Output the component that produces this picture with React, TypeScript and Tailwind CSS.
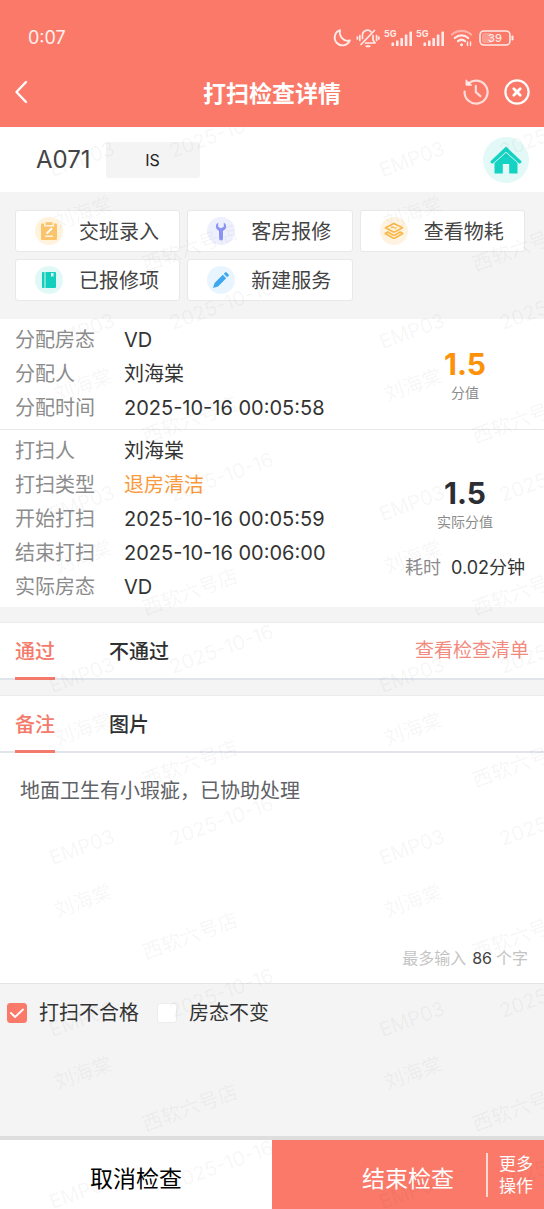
import { useState } from "react";
import type { ReactNode } from "react";

const signalIcon = (
  <svg viewBox="0 0 30 20" className="h-5 w-[30px]" fill="currentColor">
    <text x="0" y="9" fontSize="9" fontWeight="700">5G</text>
    <rect x="7.5" y="14.5" width="2.6" height="3.5" rx="0.6" />
    <rect x="12" y="12.5" width="2.6" height="5.5" rx="0.6" />
    <rect x="16.4" y="10" width="2.6" height="8" rx="0.6" />
    <rect x="20.8" y="6.5" width="2.6" height="11.5" rx="0.6" />
    <rect x="25.4" y="3.5" width="2.6" height="14.5" rx="0.6" />
  </svg>
);

const moonIcon = (
  <svg viewBox="0 0 20 20" className="size-5" fill="none" stroke="currentColor" strokeWidth={1.9} strokeLinejoin="round">
    <path d="M8 2.2a7.8 7.8 0 1 0 9.8 10.2c-5.800 2-11-4-9.800-10.200z" />
  </svg>
);

const muteIcon = (
  <svg viewBox="0 0 24 20" className="h-5 w-6" fill="none" stroke="currentColor" strokeWidth={1.7} strokeLinecap="round" strokeLinejoin="round">
    <path d="M6.500 10.500V8a5 5 0 0 1 8.500-4.200M17 7.500v4.500l2 3H9.500" />
    <path d="M5 16.500L18.500 2.500" />
    <path d="M10.500 18.300h3" strokeWidth={2} />
    <path d="M3.800 7.500v5M1.400 9v2M20.600 7.500v5M22.800 9v2" />
  </svg>
);

const wifiIcon = (
  <svg viewBox="0 0 24 20" className="h-5 w-6" fill="none" stroke="currentColor" strokeWidth={2.2} strokeLinecap="round">
    <path d="M2 6.5a14.5 14.5 0 0 1 19 0" opacity="0.5" />
    <path d="M4.8 10a10 10 0 0 1 13.4 0" />
    <path d="M8 13.2a5.5 5.5 0 0 1 7 0" />
    <circle cx="11.5" cy="16.8" r="1" fill="currentColor" strokeWidth={1} />
    <path d="M17.5 17.5v-3.5M20.5 14v3.5" strokeWidth={1.4} />
  </svg>
);

const batteryIcon = (
  <svg viewBox="0 0 36 20" className="h-5 w-9" fill="none" stroke="currentColor">
    <rect x="2" y="3" width="30" height="14" rx="4" strokeWidth={1.6} />
    <rect x="4" y="5" width="10" height="10" rx="2" fill="currentColor" stroke="none" opacity="0.3" />
    <path d="M34.5 8.5v3" strokeWidth={2} strokeLinecap="round" />
    <text x="17" y="14" fontSize="11" fontWeight="500" textAnchor="middle" fill="currentColor" stroke="none">39</text>
  </svg>
);

const backIcon = (
  <svg viewBox="0 0 14 24" className="h-6 w-3.5" fill="none" stroke="currentColor" strokeWidth={2.4} strokeLinecap="round" strokeLinejoin="round">
    <path d="M12 2L2.5 12 12 22" />
  </svg>
);

const historyIcon = (
  <svg viewBox="0 0 26 26" className="size-[26px]" fill="none" stroke="currentColor" strokeWidth={2.2} strokeLinecap="round" strokeLinejoin="round">
    <path d="M1.6 12.5a11.5 11.5 0 1 0 4.2-8.3" />
    <path d="M3 1.200v5h5.400z" fill="currentColor" strokeWidth={1} />
    <path d="M12.8 6.8v6.4l4.6 4" />
  </svg>
);

const closeIcon = (
  <svg viewBox="0 0 26 26" className="size-[26px]" fill="none" stroke="currentColor" strokeLinecap="round">
    <circle cx="13" cy="13" r="11.6" strokeWidth={2.2} />
    <path d="M9.8 9.8l6.4 6.4M16.2 9.8l-6.4 6.400" strokeWidth={2.8} />
  </svg>
);

const homeIcon = (
  <svg viewBox="0 0 32 28" className="h-7 w-8" fill="#15d3c3">
    <path d="M16 0.500L31.200 15c1 1.200-0.800 3.400-2.400 2.200L16 5.800 3.200 17.200c-1.600 1.200-3.400-1-2.400-2.200z" />
    <path d="M16 6.800L27.500 17V27.5h-8.300V18h-6.400v9.500H4.500V17z" />
  </svg>
);

const clipboardIcon = (
  <svg viewBox="0 0 18 20" className="h-5 w-[18px]">
    <path d="M2 2.500h2v3h10v-3h2a1 1 0 0 1 1 1v14.500a1 1 0 0 1-1 1H2a1 1 0 0 1-1-1V3.500a1 1 0 0 1 1-1z" fill="#fcc46a" />
    <path d="M5.500 1.2h7v2.800h-7z" fill="#fcc46a" />
    <path d="M7.200 12l4.400-4.400" stroke="#fff" strokeWidth={2} strokeLinecap="round" />
    <path d="M5 15.2h8" stroke="#fff" strokeWidth={1.2} />
  </svg>
);

const wrenchIcon = (
  <svg viewBox="0 0 16 20" className="h-5 w-4" fill="#8c96f4">
    <path d="M5.200 1.600v4.200L8 7.200l2.800-1.400V1.600A4.600 4.600 0 0 1 10 10v7.400a2 2 0 0 1-4 0V10A4.600 4.600 0 0 1 5.200 1.600z" />
  </svg>
);

const layersIcon = (
  <svg viewBox="0 0 20 18" className="h-[18px] w-5" fill="none" stroke="#f8b84a" strokeWidth={1.7} strokeLinejoin="round" strokeLinecap="round">
    <path d="M10 1.5l8.500 4.200-7 3.800a3 3 0 0 1-3 0L1.500 5.700z" />
    <path d="M7.500 5.600q1.200-1.200 2.500 0t2.500 0" strokeWidth={1.2} />
    <path d="M1.300 11.500l7.200 4.200a3 3 0 0 0 3 0l7.200-4.200-2.500-1.500-4.700 2.800a3 3 0 0 1-3 0L3.800 10z" />
  </svg>
);

const bookIcon = (
  <svg viewBox="0 0 14 18" className="h-[18px] w-3.5">
    <rect x="0" y="1" width="14" height="16" rx="1" fill="#12cfbd" />
    <path d="M3 1v16" stroke="#d9f7f4" strokeWidth={1} />
    <path d="M9 2h2.500v4L10.250 5 9 6z" fill="#d9f7f4" />
  </svg>
);

const pencilIcon = (
  <svg viewBox="0 0 18 18" className="size-[18px]" fill="#3ea6ee">
    <path d="M10.8 3.8l3.4 3.4-8.200 8.200L1 17l1.600-5z" />
    <path d="M11.8 2.8L13.2 1.4a1 1 0 0 1 1.4 0l2 2a1 1 0 0 1 0 1.4l-1.400 1.4z" />
  </svg>
);

const actions = [
  { label: "交班录入", icon: clipboardIcon, tint: "bg-[#fff3de]" },
  { label: "客房报修", icon: wrenchIcon, tint: "bg-[#eff0fe]" },
  { label: "查看物耗", icon: layersIcon, tint: "bg-[#fef3e0]" },
  { label: "已报修项", icon: bookIcon, tint: "bg-[#e0f9f7]" },
  { label: "新建服务", icon: pencilIcon, tint: "bg-[#e8f5fe]" },
];

const assignRows = [
  { label: "分配房态", value: "VD" },
  { label: "分配人", value: "刘海棠" },
  { label: "分配时间", value: "2025-10-16 00:05:58" },
];

const cleanRows = [
  { label: "打扫人", value: "刘海棠" },
  { label: "打扫类型", value: "退房清洁", highlight: true },
  { label: "开始打扫", value: "2025-10-16 00:05:59" },
  { label: "结束打扫", value: "2025-10-16 00:06:00" },
  { label: "实际房态", value: "VD" },
];

type Row = { label: string; value: string; highlight?: boolean };

function Rows({ rows }: { rows: Row[] }) {
  return (
    <dl className="flex-1">
      {rows.map(({ label, value, highlight }) => (
        <div key={label} className="flex h-[34px] items-center">
          <dt className="w-[109px] shrink-0 text-[#8c8c8c]">{label}</dt>
          <dd className={highlight ? "text-[#fb9a3c]" : "text-[#333]"}>{value}</dd>
        </div>
      ))}
    </dl>
  );
}

function Tabs({ names, children }: { names: string[]; children?: ReactNode }) {
  const [active, setActive] = useState(names[0]);
  return (
    <div className="flex h-[58px] items-stretch border-t border-b-2 border-t-[#ececec] border-b-[#e2e4ec] bg-white px-[15px]">
      <div role="tablist" className="flex flex-1 gap-[54px]">
        {names.map((name) => (
          <button
            key={name}
            type="button"
            role="tab"
            aria-selected={name === active}
            onClick={() => setActive(name)}
            className={
              name === active
                ? "-mb-0.5 border-b-3 border-[#f47a6b] pt-1 font-medium text-[#f47a6b]"
                : "-mb-0.5 border-b-3 border-transparent pt-1 font-medium text-[#303133]"
            }
          >
            {name}
          </button>
        ))}
      </div>
      {children}
    </div>
  );
}

function Check({ label, defaultChecked }: { label: string; defaultChecked?: boolean }) {
  return (
    <label className="flex items-center gap-3 text-[#333]">
      <span className="relative flex">
        <input
          type="checkbox"
          defaultChecked={defaultChecked}
          className="peer size-5 appearance-none rounded-[3px] border border-[#ececec] bg-white checked:border-[#fb7969] checked:bg-[#fb7969]"
        />
        <svg
          viewBox="0 0 20 20"
          className="pointer-events-none absolute inset-0 hidden size-5 peer-checked:block"
          fill="none"
          stroke="#fff"
          strokeWidth={1.8}
          strokeLinecap="round"
          strokeLinejoin="round"
        >
          <path d="M4 10l4 4 8-7.5" />
        </svg>
      </span>
      {label}
    </label>
  );
}

// two columns cover a phone, the other two only show on wider windows
const watermarkColumns = ["relative", "relative", "relative hidden sm:block", "relative hidden sm:block"];

function Watermark() {
  return (
    <div
      aria-hidden="true"
      className="pointer-events-none absolute inset-x-0 top-[104px] bottom-0 z-10 overflow-hidden whitespace-nowrap text-black/5 select-none"
    >
      {Array.from({ length: 7 }, (_, row) => (
        <div key={row} className="grid h-[172px] grid-cols-[repeat(4,330px)]">
          {watermarkColumns.map((className, col) => (
            <div key={col} className={className}>
              <span className="absolute top-[15px] left-[167px] -rotate-20">2025-10-16</span>
              <span className="absolute top-[41px] left-12 -rotate-20">EMP03</span>
              <span className="absolute top-[95px] left-[53px] -rotate-20">刘海棠</span>
              <span className="absolute top-[130px] left-[140px] -rotate-20">西软六号店</span>
            </div>
          ))}
        </div>
      ))}
    </div>
  );
}

export default function App() {
  const [note, setNote] = useState("地面卫生有小瑕疵，已协助处理");

  return (
    <div
      lang="zh-CN"
      className="relative flex min-h-screen flex-col bg-[#f4f4f4] font-[Inter,'Noto_Sans_CJK_SC',sans-serif] text-[20px] leading-[28px]"
    >
      <header className="relative z-20 bg-[#fb7969] text-white">
        <div className="flex h-[57px] items-end justify-between pr-[30px] pb-[5px] pl-7">
          <span className="text-[18px] text-white/90">0:07</span>
          <div className="flex h-7 items-center gap-0.5 text-white/85">
            {moonIcon}
            <span className="px-0.5">{muteIcon}</span>
            {signalIcon}
            {signalIcon}
            <span className="px-0.5">{wifiIcon}</span>
            {batteryIcon}
          </div>
        </div>
        <div className="grid h-[70px] grid-cols-[1fr_auto_1fr] items-center px-[14px]">
          <button type="button" aria-label="返回" className="justify-self-start">
            {backIcon}
          </button>
          <h1 className="pt-1 text-[23px] font-bold">打扫检查详情</h1>
          <div className="flex gap-[15px] justify-self-end">
            <button type="button" aria-label="历史" className="text-white/75">
              {historyIcon}
            </button>
            <button type="button" aria-label="关闭">
              {closeIcon}
            </button>
          </div>
        </div>
      </header>

      <section className="flex h-[65px] items-center bg-white pr-[15px] pl-9">
        <span className="text-[24px] text-[#444]">A071</span>
        <span className="ml-[15px] flex h-9 w-[94px] items-center justify-center rounded-[3px] bg-[#f4f4f4] text-[16px] text-[#222]">
          IS
        </span>
        <button type="button" aria-label="首页" className="ml-auto flex size-[46px] items-center justify-center rounded-full bg-[#e3f9f8]">
          {homeIcon}
        </button>
      </section>

      <section className="grid grid-cols-3 gap-[7px] py-[18px] pr-[19px] pl-[15px]">
        {actions.map(({ label, icon, tint }) => (
          <button
            key={label}
            type="button"
            className="flex h-[42px] items-center gap-4 rounded-[3px] border border-[#e8e8e8] bg-white pl-[19px] text-[#444]"
          >
            <span className={`flex size-7 shrink-0 items-center justify-center rounded-full ${tint}`}>{icon}</span>
            <span className="pt-0.5 whitespace-nowrap">{label}</span>
          </button>
        ))}
      </section>

      <section className="flex border-b border-[#e8e8e8] bg-white py-1 pr-[18px] pl-[15px]">
        <Rows rows={assignRows} />
        <div className="flex w-[122px] flex-col items-center justify-center pt-1">
          <strong className="text-[30px] leading-[34px] text-[#fb9209]">1.5</strong>
          <span className="text-[14px] leading-6 text-[#8c8c8c]">分值</span>
        </div>
      </section>

      <section className="flex bg-white pt-1 pr-[18px] pb-[3px] pl-[15px]">
        <Rows rows={cleanRows} />
        <div className="flex w-[122px] flex-col items-center justify-end pb-[22px]">
          <strong className="text-[30px] leading-[34px] text-[#2c2e33]">1.5</strong>
          <span className="text-[14px] leading-6 text-[#8c8c8c]">实际分值</span>
          <p className="mt-5 flex gap-[10px] text-[18px] whitespace-nowrap text-[#333]">
            <span className="text-[#8c8c8c]">耗时</span>0.02分钟
          </p>
        </div>
      </section>

      <div className="mt-[15px]">
        <Tabs names={["通过", "不通过"]}>
          <a href="#list" className="self-center text-[19px] text-[#f28a7d]">
            查看检查清单
          </a>
        </Tabs>
      </div>

      <div className="mt-[15px]">
        <Tabs names={["备注", "图片"]} />
        <div className="flex flex-col border-b border-[#e4e4e4] bg-white px-5 pt-6 pb-[11px]">
          <textarea
            aria-label="备注"
            value={note}
            maxLength={100}
            onChange={(e) => setNote(e.target.value)}
            className="h-[167px] w-full resize-none text-[#5f6266] outline-none"
          />
          <p className="-mr-1 flex justify-end gap-1 text-[16px] text-[#c4c4c4]">
            最多输入
            <span className="pl-0.5 text-[#444]">{100 - note.length}</span>
            个字
          </p>
        </div>
      </div>

      <div className="flex flex-1 items-start gap-[18px] px-[7px] pt-[15px]">
        <Check label="打扫不合格" defaultChecked />
        <Check label="房态不变" />
      </div>

      <footer className="flex h-[73px] border-t-4 border-[#dedede] text-[23px]">
        <button type="button" className="flex-1 bg-white pt-2 text-black">
          取消检查
        </button>
        <div className="flex flex-1 items-center bg-[#fb7969] text-white">
          <button type="button" className="h-full flex-1 pt-2 pl-[58px]">
            结束检查
          </button>
          <button type="button" className="w-[58px] border-l-2 border-white/70 text-[17px] leading-[22px]">
            更多
            <br />
            操作
          </button>
        </div>
      </footer>

      <Watermark />
    </div>
  );
}
